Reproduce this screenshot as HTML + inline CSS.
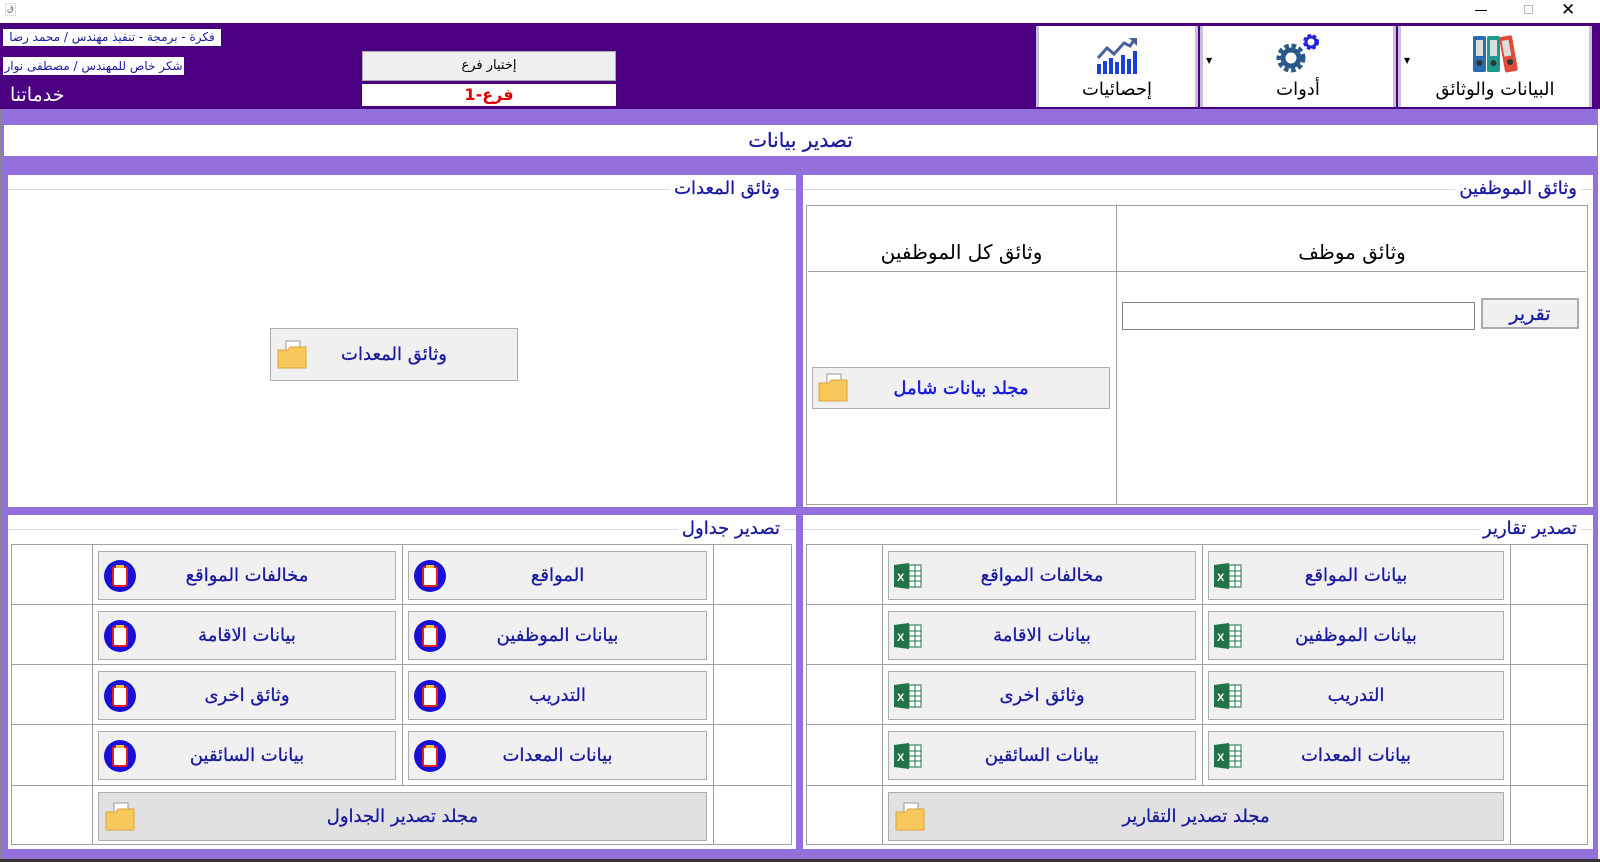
<!DOCTYPE html>
<html><head><meta charset="utf-8"><style>
*{box-sizing:border-box;margin:0;padding:0}
body{width:1600px;height:862px;position:relative;overflow:hidden;background:#fff;font-family:"DejaVu Sans","Liberation Sans",sans-serif;}
.a{position:absolute}
.t{direction:rtl;white-space:nowrap}
.btn{position:absolute;background:#f0f0f0;border:1px solid #adadad;color:#1a1aa0;font-size:18px;display:flex;align-items:center;justify-content:center;direction:rtl;-webkit-text-stroke:0.3px #1a1aa0}
.btn.d{background:#e1e1e1}
.btn svg{position:absolute;left:4px;top:50%;transform:translateY(-50%)}
.sec{position:absolute;background:#fff}
.head{position:absolute;right:12px;top:3px;color:#1a1aa0;font-size:18px;direction:rtl;background:#fff;padding:0 4px;-webkit-text-stroke:0.3px #1a1aa0}
.hl{position:absolute;left:0;right:0;top:14px;border-top:1px solid #dcdcdc}
.cell{position:absolute;border:1px solid #a0a0a0}
.hb{position:absolute;top:26px;height:81px;background:#fff;border-left:3px solid #c8c0d8;border-right:3px solid #c8c0d8;text-align:center;direction:rtl;font-size:18px;color:#000}
</style></head><body>
<div class="a" style="left:5px;top:3px;width:11px;height:13px;border:1px solid #ddd;font-size:9px;color:#666;text-align:center;line-height:11px">ق</div>
<div class="a" style="left:1475px;top:10px;width:12px;border-top:1px solid #000"></div>
<div class="a" style="left:1524px;top:5px;width:9px;height:9px;border:1px solid #bbb"></div>
<div class="a" style="left:1561px;top:0px;font-size:17px;color:#000">✕</div>
<div class="a" style="left:0;top:23px;width:1600px;height:86px;background:#4b0082"></div>
<div class="a t" style="left:3px;top:29px;width:218px;height:17px;background:#fff;color:#1a1aa0;font-size:12px;line-height:17px;text-align:center">فكرة - برمجة - تنفيذ مهندس / محمد رضا</div>
<div class="a t" style="left:3px;top:57px;width:181px;height:18px;background:#fff;color:#1a1aa0;font-size:12px;line-height:18px;text-align:center">شكر خاص للمهندس / مصطفى نوار</div>
<div class="a t" style="left:10px;top:84px;color:#fff;font-size:19px">خدماتنا</div>
<div class="a t" style="left:362px;top:51px;width:254px;height:30px;background:#efefef;border:1px solid #aaa;font-size:13px;line-height:28px;text-align:center">إختيار فرع</div>
<div class="a t" style="left:362px;top:84px;width:254px;height:22px;background:#fff;color:#e00000;font-size:16px;font-weight:bold;line-height:22px;text-align:center">فرع-1</div>

<div class="hb" style="left:1036px;width:162px">
<svg width="44" height="38" viewBox="0 0 44 38" style="margin-top:10px"><path d="M3 22 L12 12 L19 18 L29 7 L35 10 L40 3" stroke="#4b5f9a" stroke-width="3" fill="none"/><path d="M34 2 L42 2 L42 10Z" fill="#4b5f9a"/><g fill="#1a3ed8"><rect x="2" y="28" width="4" height="10"/><rect x="8" y="25" width="4" height="13"/><rect x="14" y="22" width="4" height="16"/><rect x="20" y="26" width="4" height="12"/><rect x="26" y="19" width="4" height="19"/><rect x="32" y="23" width="4" height="15"/><rect x="38" y="15" width="4" height="23"/></g></svg>
<div>إحصائيات</div></div>
<div class="hb" style="left:1200px;width:196px">
<svg width="54" height="42" viewBox="0 0 54 42" style="margin-top:6px"><circle cx="20" cy="26" r="11" fill="none" stroke="#2b5a8a" stroke-width="7" stroke-dasharray="4 2.5"/><circle cx="20" cy="26" r="8" fill="none" stroke="#2b5a8a" stroke-width="5"/><circle cx="40" cy="10" r="6" fill="none" stroke="#2222dd" stroke-width="4" stroke-dasharray="3 2"/><circle cx="40" cy="10" r="5" fill="none" stroke="#2222dd" stroke-width="3"/></svg>
<div>أدوات</div><span style="position:absolute;left:3px;top:30px;font-size:8px">▼</span></div>
<div class="hb" style="left:1398px;width:194px">
<svg width="48" height="42" viewBox="0 0 48 42" style="margin-top:6px"><rect x="2" y="4" width="13" height="36" rx="2" fill="#2a6cb0"/><rect x="16" y="4" width="13" height="36" rx="2" fill="#1e9a8a"/><rect x="31" y="4" width="13" height="36" rx="2" fill="#e04a3a" transform="rotate(-10 37 22)"/><g fill="#ddd"><rect x="5" y="8" width="7" height="16"/><rect x="19" y="8" width="7" height="16"/><rect x="33" y="8" width="7" height="16" transform="rotate(-10 37 22)"/></g><g fill="#333"><circle cx="8.5" cy="31" r="3"/><circle cx="22.5" cy="31" r="3"/><circle cx="39" cy="30" r="3"/></g></svg>
<div>البيانات والوثائق</div><span style="position:absolute;left:3px;top:30px;font-size:8px">▼</span></div>

<div class="a" style="left:0;top:109px;width:1598px;height:750px;background:#9370db;border-left:2px solid #888"></div>
<div class="a" style="left:0;top:859px;width:1600px;height:3px;background:#333"></div>
<div class="a t" style="left:4px;top:125px;width:1593px;height:31px;background:#fff;color:#1a1aa0;font-size:20px;line-height:31px;text-align:center;-webkit-text-stroke:0.3px #1a1aa0">تصدير بيانات</div>

<div class="sec" style="left:803px;top:175px;width:790px;height:332px"><div class="hl"></div><div class="head">وثائق الموظفين</div></div>
<div class="cell" style="left:806px;top:205px;width:311px;height:300px"></div>
<div class="cell" style="left:1116px;top:205px;width:472px;height:300px"></div>
<div class="a" style="left:808px;top:271px;width:778px;border-top:1px solid #a0a0a0"></div>
<div class="a t" style="left:1117px;top:240px;width:470px;text-align:center;font-size:20px">وثائق موظف</div>
<div class="a t" style="left:807px;top:240px;width:309px;text-align:center;font-size:20px">وثائق كل الموظفين</div>
<div class="a" style="left:1122px;top:302px;width:353px;height:28px;border:1px solid #888;background:#fff"></div>
<div class="btn" style="left:1481px;top:298px;width:98px;height:31px;border:2px solid #aaa;font-size:19px">تقرير</div>
<div class="btn" style="left:812px;top:367px;width:298px;height:42px;font-size:18px;color:#1a1ae0;-webkit-text-stroke:0.5px #1a1ae0"><svg width="32" height="32" viewBox="0 0 32 32"><rect x="10" y="2" width="14" height="12" fill="#fff" stroke="#999"/><path d="M2 11h10l2-3h16v21H2z" fill="#f7c85a" stroke="#d9a440"/></svg>مجلد بيانات شامل</div>

<div class="sec" style="left:8px;top:175px;width:788px;height:332px"><div class="hl"></div><div class="head">وثائق المعدات</div></div>
<div class="btn" style="left:270px;top:328px;width:248px;height:53px;font-size:18px"><svg width="34" height="32" viewBox="0 0 32 32"><rect x="10" y="2" width="14" height="12" fill="#fff" stroke="#999"/><path d="M2 11h10l2-3h16v21H2z" fill="#f7c85a" stroke="#d9a440"/></svg>وثائق المعدات</div>

<div class="sec" style="left:803px;top:515px;width:790px;height:334px"><div class="hl"></div><div class="head">تصدير تقارير</div></div>
<div class="sec" style="left:8px;top:515px;width:788px;height:334px"><div class="hl"></div><div class="head">تصدير جداول</div></div>

<div id="tables"></div>
<script>
var xl='<svg width="30" height="28" viewBox="0 0 30 28"><rect x="12" y="3" width="16" height="22" fill="#fff" stroke="#217346"/><g stroke="#217346" stroke-width="1"><line x1="16" y1="3" x2="16" y2="25"/><line x1="22" y1="3" x2="22" y2="25"/><line x1="12" y1="9" x2="28" y2="9"/><line x1="12" y1="14" x2="28" y2="14"/><line x1="12" y1="19" x2="28" y2="19"/></g><path d="M1 3l15-2v26l-15-2z" fill="#217346"/><text x="4" y="19" direction="ltr" font-size="11" fill="#fff" font-family="Liberation Sans" font-weight="bold" style="direction:ltr">X</text></svg>';
var cl='<svg width="34" height="34" viewBox="0 0 34 34"><circle cx="17" cy="17" r="16" fill="#1a0fd8"/><rect x="10" y="8" width="14" height="19" rx="2" fill="#fff" stroke="#e02020" stroke-width="2"/><rect x="13" y="6" width="8" height="3" fill="#f0c040"/></svg>';
var fd='<svg width="34" height="32" viewBox="0 0 32 32"><rect x="10" y="2" width="14" height="12" fill="#fff" stroke="#999"/><path d="M2 11h10l2-3h16v21H2z" fill="#f7c85a" stroke="#d9a440"/></svg>';
var rows=[544,604,664,724,785,845];
function table(cols,labels,icon){
 var h='';
 h+='<div class="cell" style="left:'+cols[0]+'px;top:544px;width:'+(cols[4]-cols[0])+'px;height:301px"></div>';
 for(var i=1;i<4;i++)h+='<div class="a" style="left:'+cols[i]+'px;top:544px;height:'+(i==2?241:301)+'px;border-left:1px solid #a0a0a0"></div>';
 for(var r=1;r<5;r++)h+='<div class="a" style="left:'+cols[0]+'px;top:'+rows[r]+'px;width:'+(cols[4]-cols[0])+'px;border-top:1px solid #a0a0a0"></div>';
 for(var r=0;r<4;r++){
  h+='<div class="btn" style="left:'+(cols[1]+6)+'px;top:'+(rows[r]+7)+'px;width:'+(cols[2]-cols[1]-12)+'px;height:49px">'+icon+labels[r][1]+'</div>';
  h+='<div class="btn" style="left:'+(cols[2]+6)+'px;top:'+(rows[r]+7)+'px;width:'+(cols[3]-cols[2]-12)+'px;height:49px">'+icon+labels[r][0]+'</div>';
 }
 h+='<div class="btn d" style="left:'+(cols[1]+6)+'px;top:'+(rows[4]+7)+'px;width:'+(cols[3]-cols[1]-12)+'px;height:49px">'+fd+labels[4]+'</div>';
 return h;
}
var L=[['بيانات المواقع','مخالفات المواقع'],['بيانات الموظفين','بيانات الاقامة'],['التدريب','وثائق اخرى'],['بيانات المعدات','بيانات السائقين'],'مجلد تصدير التقارير'];
var L2=[['المواقع','مخالفات المواقع'],['بيانات الموظفين','بيانات الاقامة'],['التدريب','وثائق اخرى'],['بيانات المعدات','بيانات السائقين'],'مجلد تصدير الجداول'];
document.getElementById('tables').innerHTML=table([806,882,1202,1510,1588],L,xl)+table([11,92,402,713,792],L2,cl);
</script>
</body></html>
